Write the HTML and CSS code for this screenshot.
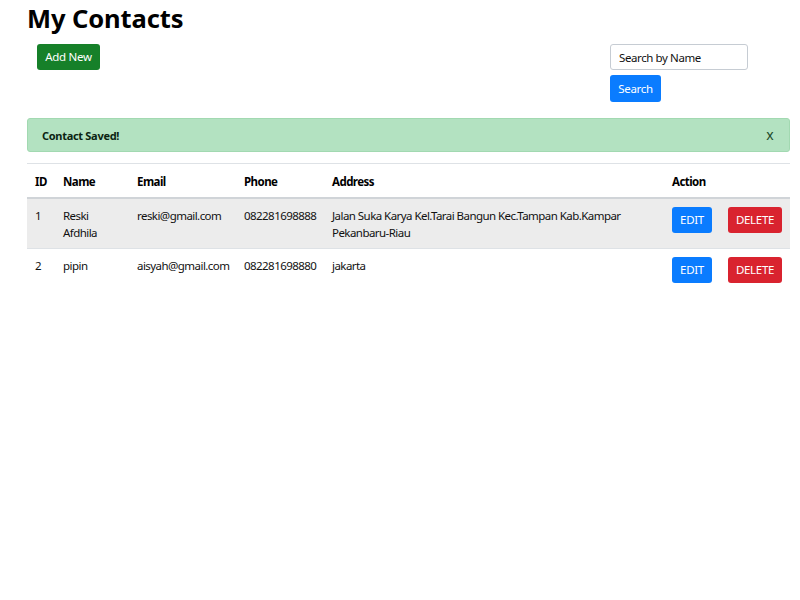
FILE: index.html
```html
<!DOCTYPE html>
<html>
<head>
<meta charset="utf-8">
<link rel="stylesheet" href="styles.css">
</head>
<body>
<h1 class="title">My Contacts</h1>
<div class="container">
  <div class="toolbar">
    <button class="btn btn-green">Add New</button>
    <form class="search">
      <input class="search-input" type="text" placeholder="Search by Name">
      <button type="button" class="btn btn-blue btn-search">Search</button>
    </form>
  </div>
  <div class="alert">
    <span class="alert-text">Contact Saved!</span>
    <span class="alert-close">x</span>
  </div>
  <table class="table">
    <colgroup>
      <col class="c-id"><col class="c-name"><col class="c-email"><col class="c-phone"><col class="c-addr"><col class="c-act">
    </colgroup>
    <thead>
      <tr><th>ID</th><th>Name</th><th>Email</th><th>Phone</th><th>Address</th><th>Action</th></tr>
    </thead>
    <tbody>
      <tr class="striped">
        <td>1</td><td>Reski Afdhila</td><td>reski@gmail.com</td><td>082281698888</td>
        <td>Jalan Suka Karya Kel.Tarai Bangun Kec.Tampan Kab.Kampar Pekanbaru-Riau</td>
        <td><div class="actions"><button class="btn btn-blue btn-edit">EDIT</button><button class="btn btn-red btn-delete">DELETE</button></div></td>
      </tr>
      <tr>
        <td>2</td><td>pipin</td><td>aisyah@gmail.com</td><td>082281698880</td>
        <td>jakarta</td>
        <td><div class="actions"><button class="btn btn-blue btn-edit">EDIT</button><button class="btn btn-red btn-delete">DELETE</button></div></td>
      </tr>
    </tbody>
  </table>
</div>
</body>
</html>
```
FILE: styles.css
```css
* { box-sizing: border-box; }
body {
  margin: 0;
  font-family: "Noto Sans", "Open Sans", sans-serif;
  font-size: 11.5px;
  letter-spacing: -0.55px;
  color: #111;
  background: #fff;
}
.title {
  margin: 0;
  padding: 1px 0 0 27px;
  font-size: 25.5px;
  line-height: 34px;
  font-weight: 700;
  letter-spacing: -0.1px;
  color: #000;
}
.container {
  margin: 0 10px 0 27px;
}
.toolbar {
  display: flex;
  justify-content: space-between;
  align-items: flex-start;
  padding: 9px 42px 0 10px;
  height: 83px;
}
.btn {
  font-family: inherit;
  font-size: 11.5px;
  letter-spacing: -0.3px;
  border: none;
  border-radius: 3px;
  color: #fff;
  cursor: pointer;
  line-height: 16px;
  padding: 0;
}
.btn-green { background: #168029; width: 63px; height: 26px; }
.btn-blue { background: #0a7cff; }
.btn-red { background: #d9232f; }
.search { display: flex; flex-direction: column; gap: 5px; margin: 0; }
.search-input {
  width: 138px;
  height: 26px;
  border: 1px solid #c6ccd3;
  border-radius: 3px;
  padding: 0 8px;
  font-family: inherit;
  font-size: 11.5px;
  letter-spacing: -0.4px;
}
.search-input::placeholder { color: #111; }
.btn-search { width: 51px; height: 27px; }
.alert {
  display: flex;
  justify-content: space-between;
  align-items: center;
  height: 34px;
  background: #b3e2c1;
  border: 1px solid #a2d9b1;
  border-radius: 3px;
  padding: 0 16px 0 14px;
}
.alert-text { font-weight: 700; font-size: 11px; color: #0b2412; letter-spacing: -0.3px; }
.alert-close { font-size: 14px; font-weight: 400; color: #1d4a2a; line-height: 1; }
.table {
  width: 100%;
  margin-top: 11px;
  border-collapse: collapse;
  table-layout: fixed;
}
.c-id { width: 28px; }
.c-name { width: 74px; }
.c-email { width: 107px; }
.c-phone { width: 88px; }
.c-addr { width: 340px; }
.c-act { width: 126px; }
.table th, .table td {
  text-align: left;
  vertical-align: top;
  padding: 8px 8px 7px;
  line-height: 17px;
  border-top: 1px solid #dee2e6;
}
.table th { font-weight: 700; color: #000; border-bottom: 2px solid #d0d4d8; padding: 9px 8px 7px; }
.table td { color: #111; }
.table tr.striped td { background: #ececec; }
.actions { display: flex; gap: 16px; }
.btn-edit { height: 26px; width: 40px; }
.btn-delete { height: 26px; width: 54px; }
```
